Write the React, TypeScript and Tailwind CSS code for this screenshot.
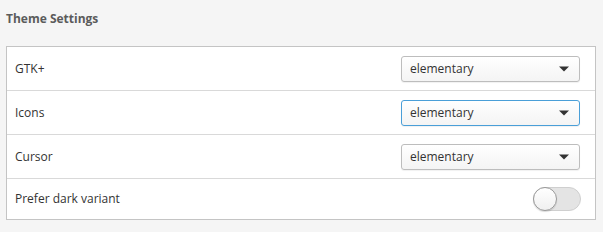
import React, { useState } from 'react';

type Row = { label: string; value?: string; focused?: boolean };

const rows: Row[] = [
  { label: 'GTK+', value: 'elementary' },
  { label: 'Icons', value: 'elementary', focused: true },
  { label: 'Cursor', value: 'elementary' },
];

function Combo({ value, focused }: { value: string; focused?: boolean }) {
  return (
    <div
      className={`flex h-[26px] w-[179px] items-center justify-between rounded-[3px] border bg-gradient-to-b from-white to-[#f4f4f4] pl-[8px] pr-[10px] shadow-[0_1px_1px_rgba(0,0,0,0.06)] ${
        focused ? 'border-[#4a9fd8]' : 'border-[#bdbdbd]'
      }`}
    >
      <span className="text-[12px] text-[#333]">{value}</span>
      <svg width="10" height="6" viewBox="0 0 10 6">
        <path d="M0 0.5h10L5 5.5z" fill="#333" />
      </svg>
    </div>
  );
}

export default function App() {
  const [dark, setDark] = useState(false);

  return (
    <div className="h-[232px] w-[603px] bg-[#f5f5f5] px-[6px] pt-[8px] font-['Open_Sans',sans-serif]">
      <p className="text-[12px] font-bold leading-[22px] text-[#5b5b5b]">Theme Settings</p>
      <div className="mt-[16px] w-[590px] border border-[#c4c4c4] bg-white">
        {rows.map((row) => (
          <div key={row.label} className="flex h-[44px] items-center justify-between border-b border-[#d9d9d9] pl-[8px] pr-[15px]">
            <span className="text-[12px] text-[#333]">{row.label}</span>
            <Combo value={row.value ?? ''} focused={row.focused} />
          </div>
        ))}
        <div className="flex h-[40px] items-center justify-between pl-[8px] pr-[14px]">
          <span className="text-[12px] text-[#333]">Prefer dark variant</span>
          <button
            onClick={() => setDark(!dark)}
            className="flex h-[24px] w-[48px] items-center rounded-full border border-[#cfcfcf] bg-[#e4e4e4]"
          >
            <span className="-ml-px h-[24px] w-[24px] rounded-full border border-[#9a9a9a] bg-gradient-to-b from-white to-[#f0f0f0] shadow-[0_1px_1px_rgba(0,0,0,0.15)]" />
          </button>
        </div>
      </div>
    </div>
  );
}
